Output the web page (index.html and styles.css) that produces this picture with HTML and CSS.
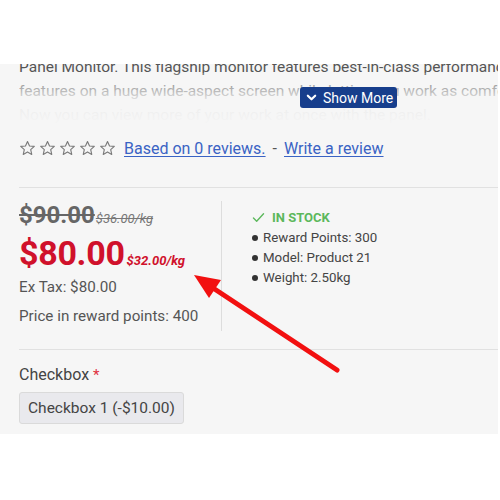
FILE: index.html
```html
<!DOCTYPE html>
<html>
<head>
<meta charset="utf-8">
<link rel="stylesheet" href="styles.css">
</head>
<body>
<div class="top"></div>
<div class="panel">
  <div class="desc">
    <p class="desc-text">Panel Monitor. This flagship monitor features best-in-class performance and presentation<br>features on a huge wide-aspect screen while letting you work as comfortably as possible.<br>Now you can view more of your work at once with the panel.</p>
    <div class="fade"></div>
    <button class="more"><svg class="chev" viewBox="0 0 12 12" width="11" height="11"><path d="M2 4 L6 8 L10 4" fill="none" stroke="#fff" stroke-width="2.4" stroke-linecap="round" stroke-linejoin="round"/></svg>Show More</button>
  </div>

  <div class="rating">
    <div class="stars">
      <svg viewBox="0 0 16 16" width="17" height="17"><path class="star" d="M8 1.4 L9.9 5.6 L14.4 6 L11 9 L12 13.6 L8 11.2 L4 13.6 L5 9 L1.6 6 L6.1 5.6 Z"/></svg>
      <svg viewBox="0 0 16 16" width="17" height="17"><path class="star" d="M8 1.4 L9.9 5.6 L14.4 6 L11 9 L12 13.6 L8 11.2 L4 13.6 L5 9 L1.6 6 L6.1 5.6 Z"/></svg>
      <svg viewBox="0 0 16 16" width="17" height="17"><path class="star" d="M8 1.4 L9.9 5.6 L14.4 6 L11 9 L12 13.6 L8 11.2 L4 13.6 L5 9 L1.6 6 L6.1 5.6 Z"/></svg>
      <svg viewBox="0 0 16 16" width="17" height="17"><path class="star" d="M8 1.4 L9.9 5.6 L14.4 6 L11 9 L12 13.6 L8 11.2 L4 13.6 L5 9 L1.6 6 L6.1 5.6 Z"/></svg>
      <svg viewBox="0 0 16 16" width="17" height="17"><path class="star" d="M8 1.4 L9.9 5.6 L14.4 6 L11 9 L12 13.6 L8 11.2 L4 13.6 L5 9 L1.6 6 L6.1 5.6 Z"/></svg>
    </div>
    <a class="link" href="#">Based on 0 reviews.</a>
    <span class="dash">-</span>
    <a class="link" href="#">Write a review</a>
  </div>

  <div class="hr hr1"></div>

  <div class="info">
    <div class="prices">
      <div class="old"><span class="old-main">$90.00</span><span class="old-kg">$36.00/kg</span></div>
      <div class="new"><span class="new-main">$80.00</span><span class="new-kg">$32.00/kg</span></div>
      <div class="line">Ex Tax: $80.00</div>
      <div class="line">Price in reward points: 400</div>
    </div>
    <div class="stock">
      <div class="instock"><svg viewBox="0 0 14 12" width="13" height="11"><path d="M1.5 6.5 L5 10 L12.5 2" fill="none" stroke="#5cb85c" stroke-width="1.5" stroke-linecap="round" stroke-linejoin="round"/></svg>IN STOCK</div>
      <ul class="specs">
        <li>Reward Points: 300</li>
        <li>Model: Product 21</li>
        <li>Weight: 2.50kg</li>
      </ul>
    </div>
  </div>

  <div class="hr"></div>

  <div class="option">
    <div class="label">Checkbox <span class="req">*</span></div>
    <div class="chk">Checkbox 1 (-$10.00)</div>
  </div>
</div>

<svg class="arrow" viewBox="0 0 500 500" width="500" height="500">
  <line x1="337" y1="370" x2="210" y2="286" stroke="#f21010" stroke-width="5" stroke-linecap="round"/>
  <polygon points="194,275 221,280 209,298" fill="#f21010"/>
</svg>
</body>
</html>
```
FILE: styles.css
```css
* { box-sizing: border-box; }
html, body { margin: 0; padding: 0; background: #fff; }
body {
  font-family: "Roboto", "Liberation Sans", sans-serif;
  color: #555;
  width: 500px;
  height: 500px;
  overflow: hidden;
  position: relative;
}
.top { height: 64px; background: #fff; }
.panel {
  width: 498px;
  height: 370px;
  background: #f6f6f6;
  overflow: hidden;
  padding-left: 19px;
}
.desc {
  position: relative;
  margin-top: -9px;
  height: 71px;
  overflow: hidden;
}
.desc-text {
  margin: 0;
  font-size: 15.5px;
  line-height: 24px;
  color: #555;
  white-space: nowrap;
}
.fade {
  position: absolute;
  left: 0; right: 0; top: 18px; bottom: 0;
  background: linear-gradient(to bottom, rgba(246,246,246,0.2) 0%, rgba(246,246,246,0.5) 25%, rgba(246,246,246,0.93) 55%, rgba(246,246,246,1) 100%);
}
.more {
  position: absolute;
  left: 281px;
  top: 32px;
  height: 21px;
  width: 97px;
  padding: 0 0 0 6px;
  border: 0;
  border-radius: 3px;
  background: #173e8c;
  color: #fff;
  font-family: "Roboto", "Liberation Sans", sans-serif;
  font-size: 14px;
  display: flex;
  align-items: center;
  gap: 6px;
}
.chev { display: block; }
.rating {
  display: flex;
  align-items: center;
  height: 44px;
  font-size: 16px;
}
.stars { display: flex; gap: 3px; margin-right: 8px; }
.stars svg { display: block; }
.star { fill: none; stroke: #7a7a7a; stroke-width: 1.05; stroke-linejoin: round; }
.link { color: #3a63c4; text-decoration: underline; text-underline-offset: 2px; }
.dash { color: #555; margin: 0 7px; }
.hr { height: 1px; background: #e1e1e1; }
.hr1 { margin-top: 17px; }
.info {
  display: flex;
  padding-top: 13px;
  height: 161px;
}
.prices {
  width: 203px;
  border-right: 1px solid #ddd;
  height: 130px;
}
.old { display: flex; align-items: baseline; height: 28px; }
.old-main {
  font-size: 24px;
  font-weight: 700;
  color: #666;
  text-decoration: line-through;
  line-height: 28px;
}
.old-kg {
  font-size: 13px;
  font-style: italic;
  color: #777;
  text-decoration: line-through;
  margin-left: 1px;
}
.new { display: flex; align-items: baseline; height: 40px; margin-top: 4px; }
.new-main {
  font-size: 34px;
  font-weight: 700;
  color: #d0112b;
  line-height: 40px;
  letter-spacing: -0.3px;
}
.new-kg {
  font-size: 13px;
  font-style: italic;
  font-weight: 700;
  color: #d0112b;
  margin-left: 2px;
}
.line { font-size: 15.2px; line-height: 29px; color: #555; }
.stock { padding-left: 30px; padding-top: 5px; }
.instock {
  display: flex;
  align-items: center;
  gap: 7px;
  color: #5cb85c;
  font-weight: 700;
  font-size: 13px;
  height: 22px;
}
.instock svg { display: block; }
.specs {
  margin: 0;
  padding: 0;
  list-style: none;
  font-size: 13.3px;
  color: #444;
}
.specs li { line-height: 20px; display: flex; align-items: center; }
.specs li::before {
  content: "";
  width: 6px; height: 6px;
  border-radius: 50%;
  background: #333;
  margin-right: 5px;
}
.option { padding-top: 15px; }
.label { font-size: 16px; color: #444; line-height: 20px; }
.req { color: #e0303f; font-size: 15px; }
.chk {
  display: inline-block;
  margin-top: 7px;
  height: 32px;
  line-height: 30px;
  padding: 0 8px;
  background: #e9e9ed;
  border: 1px solid #dadada;
  border-radius: 3px;
  font-size: 15.5px;
  color: #444;
}
.arrow { position: absolute; left: 0; top: 0; pointer-events: none; }
```
